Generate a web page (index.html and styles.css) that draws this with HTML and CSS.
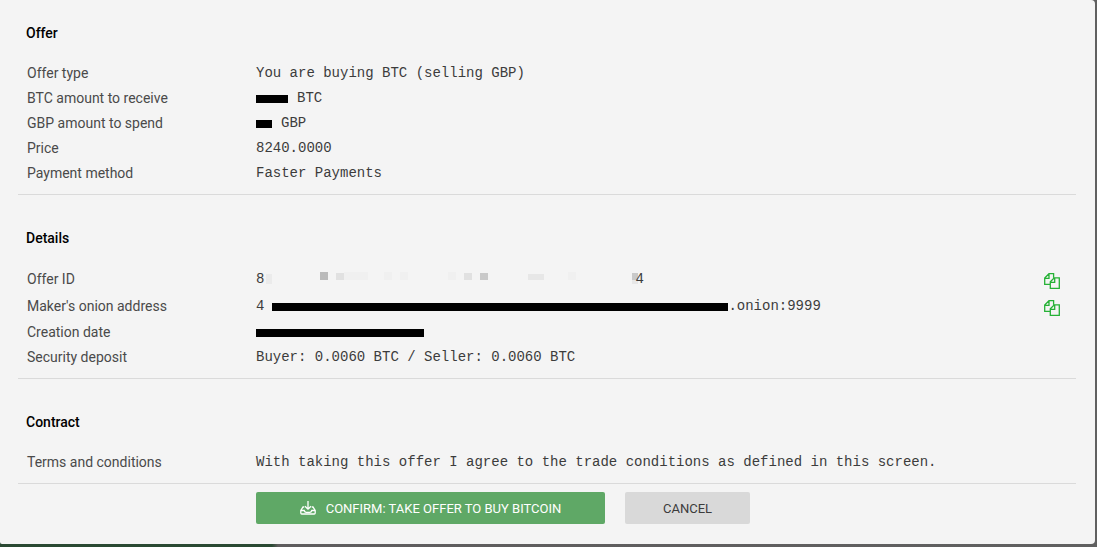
FILE: index.html
```html
<!DOCTYPE html>
<html lang="en">
<head>
<meta charset="utf-8">
<title>Take offer</title>
<link rel="stylesheet" href="styles.css">
</head>
<body>
<svg class="symbols" aria-hidden="true">
  <symbol id="copy" viewBox="0 0 16 16">
    <path d="M6 11.300H.7V5L5 .7h4.600v4M.7 5.300H5V.7M6.300 8.800L10.300 4.800H15.300V15.300H6.300zM6.300 9.300H10.700V4.800" fill="none" stroke="currentColor" stroke-width="1.300"/>
  </symbol>
</svg>
<main class="dialog">
  <section class="group">
    <h2 class="title">Offer</h2>
    <dl class="rows">
      <div class="row"><dt class="label">Offer type</dt><dd class="value">You are buying BTC (selling GBP)</dd></div>
      <div class="row"><dt class="label">BTC amount to receive</dt><dd class="value amount"><span class="redacted redacted-btc"></span>BTC</dd></div>
      <div class="row"><dt class="label">GBP amount to spend</dt><dd class="value amount"><span class="redacted redacted-gbp"></span>GBP</dd></div>
      <div class="row"><dt class="label">Price</dt><dd class="value">8240.0000</dd></div>
      <div class="row"><dt class="label">Payment method</dt><dd class="value">Faster Payments</dd></div>
    </dl>
  </section>
  <section class="group">
    <h2 class="title">Details</h2>
    <dl class="rows">
      <div class="row row-copy"><dt class="label">Offer ID</dt><dd class="value"><span>8</span><svg class="mosaic" width="371" height="27" viewBox="264 265 371 27" aria-hidden="true">
        <path fill="#ebebeb" d="M266 274h6v10h-6z"/>
        <path fill="#bababa" d="M320 272h8v8h-8z"/>
        <path fill="#e1e1e1" d="M336 273h8v7h-8zM464 273h8v7h-8z"/>
        <path fill="#f0f0f0" d="M344 272h24v8h-24zM384 272h8v8h-8zM400 272h8v8h-8zM448 272h8v8h-8zM568 272h8v8h-8z"/>
        <path fill="#c9c9c9" d="M480 273h8v7h-8zM632 273h6v7h-6z"/>
        <path fill="#e7e7e7" d="M528 274h16v6h-16zM632 280h6v4h-6z"/>
      </svg><span>4</span></dd><dd class="action"><button class="copy" type="button" aria-label="Copy offer ID"><svg class="copy-icon"><use href="#copy"/></svg></button></dd></div>
      <div class="row row-copy"><dt class="label">Maker's onion address</dt><dd class="value address"><span>4</span><span class="redacted redacted-address"></span><span>.onion:9999</span></dd><dd class="action"><button class="copy" type="button" aria-label="Copy maker's onion address"><svg class="copy-icon"><use href="#copy"/></svg></button></dd></div>
      <div class="row"><dt class="label">Creation date</dt><dd class="value"><span class="redacted redacted-date"></span></dd></div>
      <div class="row"><dt class="label">Security deposit</dt><dd class="value">Buyer: 0.0060 BTC / Seller: 0.0060 BTC</dd></div>
    </dl>
  </section>
  <section class="group">
    <h2 class="title">Contract</h2>
    <dl class="rows">
      <div class="row"><dt class="label">Terms and conditions</dt><dd class="value">With taking this offer I agree to the trade conditions as defined in this screen.</dd></div>
    </dl>
  </section>
  <div class="buttons">
    <button class="button confirm" type="button">
      <svg class="confirm-icon" viewBox="0 0 16 14" aria-hidden="true"><path d="M8 0v8M5 5.200l3 3 3-3M4.200 6H3L.8 9.500V12q0 1 1 1h12.400q1 0 1-1V9.500L13 6h-1.200M1 9.500h3.200q.5 1.800 2 1.800h3.600q1.500 0 2-1.800H15" fill="none" stroke="currentColor" stroke-width="1.300"/></svg>
      <span>CONFIRM: TAKE OFFER TO BUY BITCOIN</span>
    </button>
    <button class="button cancel" type="button">CANCEL</button>
  </div>
</main>
</body>
</html>
```
FILE: styles.css
```css
* { box-sizing: border-box; }

body {
  margin: 0;
  min-height: 100vh;
  padding: 0 2px 3px 0;
  background: linear-gradient(90deg, #2a4933 272px, #5e5c5d 278px, #606060);
  font-family: Roboto, "Liberation Sans", sans-serif;
  font-size: 14px;
  color: #4a4a4a;
}

.symbols { position: absolute; width: 0; height: 0; }

.dialog {
  padding: 0 19px 20px 18px;
  background: #f4f4f4;
  border-radius: 0 4px 4px 2px;
}

.group {
  padding: 33px 0 9px;
  border-bottom: 1px solid #dadada;
}

.group:first-child { padding-top: 23px; }

.title {
  margin: 0 0 17px;
  padding-left: 8px;
  font-size: 14px;
  line-height: 20px;
  font-weight: 500;
  color: #000;
}

.rows { margin: 0; }

.row {
  display: flex;
  align-items: center;
  min-height: 25px;
  padding-left: 9px;
}

.row-copy { min-height: 27px; }

.label { flex: 0 0 229px; }

.value {
  display: flex;
  flex: 1;
  align-items: center;
  margin: 0;
  font-family: "Liberation Mono", monospace;
  color: #3c3c3c;
}

.amount { gap: 9px; }

.redacted {
  height: 8px;
  margin-top: 2px;
  background: #000;
}

.redacted-btc { width: 32px; }
.redacted-gbp { width: 16px; }
.redacted-date { width: 168px; }
.redacted-address { width: 456px; margin-left: 8px; }

.mosaic { overflow: visible; }

.action { display: flex; margin: 0; padding: 4px 16px 0 0; }

.copy {
  display: flex;
  padding: 0;
  border: 0;
  background: none;
  color: #25b135;
}

.copy-icon { width: 16px; height: 16px; }

.buttons {
  display: flex;
  gap: 20px;
  padding: 8px 0 0 238px;
}

.button {
  display: flex;
  align-items: center;
  justify-content: center;
  gap: 10px;
  height: 32px;
  padding: 0 30px;
  border: 0;
  border-radius: 2px;
  font: 13px Roboto, "Liberation Sans", sans-serif;
}

.confirm { min-width: 349px; background: #5fa866; color: #fff; }
.cancel { min-width: 125px; background: #d9d9d9; color: #3c3c3c; }
.confirm-icon { width: 16px; height: 14px; }
```
